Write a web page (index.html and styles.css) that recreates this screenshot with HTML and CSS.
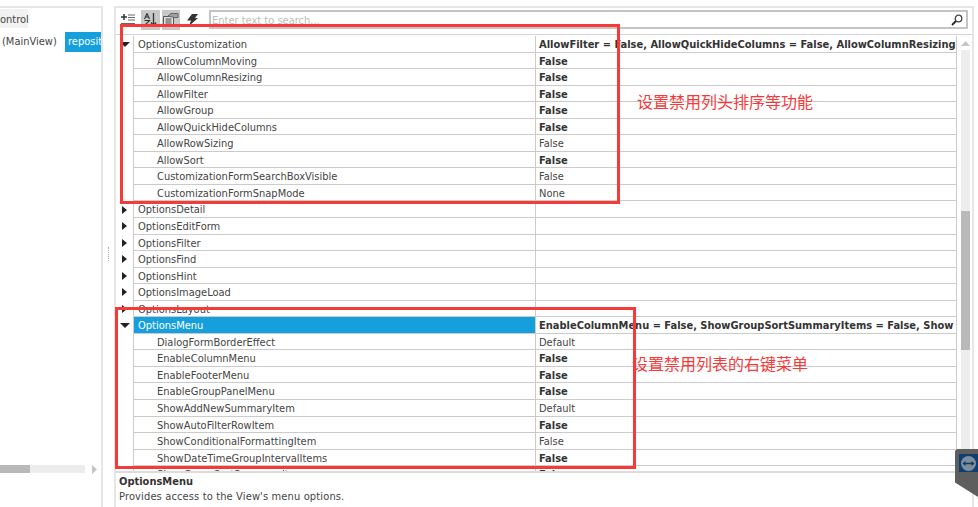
FILE: index.html
```html
<!DOCTYPE html>
<html lang="en">
<head>
<meta charset="utf-8">
<title>Properties</title>
<link rel="stylesheet" href="styles.css">
</head>
<body>
<div class="page">
  <aside class="tree">
    <div class="tree-body">
      <div class="tree-head"><span class="tree-root">ontrol</span></div>
      <div class="tree-line"><span class="tree-view">(MainView)</span><span class="tree-sel">reposit</span></div>
    </div>
    <div class="hscroll">
      <span class="hthumb"></span><span class="htrack"></span>
      <svg class="harrow" width="5" height="9" viewBox="0 0 5 9"><path d="M0 0l5 4.500L0 9z" fill="#c4c4c4"/></svg>
    </div>
  </aside>
  <div class="splitter"><span class="dots"></span></div>
  <main class="props">
    <div class="toolbar">
      <button class="tool first">
        <svg width="14" height="12" viewBox="0 0 14 12"><path d="M0 3h6M3 0v6M0 10h14" stroke="#333" stroke-width="1.500" fill="none"/><path d="M7 1h7M7 3.500h7M7 6h7" stroke="#666" stroke-width="1" fill="none"/></svg>
      </button>
      <button class="tool on">
        <svg width="13" height="13" viewBox="0 0 13 13"><path d="M0.500 6l2.500-5.500L5.500 6M1.300 4h3.400M0.500 7.500h5L0.500 12.500h5" stroke="#333" stroke-width="1.100" fill="none"/><path d="M9.500 0v12M7 9.500l2.500 3 2.500-3" stroke="#333" stroke-width="1.300" fill="none"/></svg>
      </button>
      <button class="tool on">
        <svg width="16" height="13" viewBox="0 0 16 13"><path d="M0.500 3.500h10v9h-10z" fill="#e4e4e4" stroke="#555"/><path d="M2.500 6h6M2.500 8h6M2.500 10h6" stroke="#444"/><path d="M5 3l3-2.500h7v4h-4z" fill="#a2a2a2" stroke="#666"/></svg>
      </button>
      <button class="tool bolt">
        <svg width="11" height="12" viewBox="0 0 11 12"><path d="M5 0h6L8 4h3L2 12l2-5.500H0z" fill="#333"/></svg>
      </button>
      <div class="search">
        <span class="placeholder">Enter text to search...</span>
        <svg class="glass" width="12" height="12" viewBox="0 0 12 12"><circle cx="7.500" cy="4.500" r="3.300" fill="none" stroke="#444" stroke-width="1.300"/><path d="M5 7l-4 4" stroke="#222" stroke-width="1.800"/></svg>
      </div>
    </div>
    <div class="grid-area">
      <div class="grid">
        <div class="row group"><span class="gutter"><i class="caret open"></i></span><span class="name">OptionsCustomization</span><span class="val bold">AllowFilter = False, AllowQuickHideColumns = False, AllowColumnResizing</span></div>
        <div class="row"><span class="gutter"></span><span class="name sub">AllowColumnMoving</span><span class="val bold">False</span></div>
        <div class="row"><span class="gutter"></span><span class="name sub">AllowColumnResizing</span><span class="val bold">False</span></div>
        <div class="row"><span class="gutter"></span><span class="name sub">AllowFilter</span><span class="val bold">False</span></div>
        <div class="row"><span class="gutter"></span><span class="name sub">AllowGroup</span><span class="val bold">False</span></div>
        <div class="row"><span class="gutter"></span><span class="name sub">AllowQuickHideColumns</span><span class="val bold">False</span></div>
        <div class="row"><span class="gutter"></span><span class="name sub">AllowRowSizing</span><span class="val">False</span></div>
        <div class="row"><span class="gutter"></span><span class="name sub">AllowSort</span><span class="val bold">False</span></div>
        <div class="row"><span class="gutter"></span><span class="name sub">CustomizationFormSearchBoxVisible</span><span class="val">False</span></div>
        <div class="row"><span class="gutter"></span><span class="name sub">CustomizationFormSnapMode</span><span class="val">None</span></div>
        <div class="row"><span class="gutter"><i class="caret"></i></span><span class="name">OptionsDetail</span><span class="val"></span></div>
        <div class="row"><span class="gutter"><i class="caret"></i></span><span class="name">OptionsEditForm</span><span class="val"></span></div>
        <div class="row"><span class="gutter"><i class="caret"></i></span><span class="name">OptionsFilter</span><span class="val"></span></div>
        <div class="row"><span class="gutter"><i class="caret"></i></span><span class="name">OptionsFind</span><span class="val"></span></div>
        <div class="row"><span class="gutter"><i class="caret"></i></span><span class="name">OptionsHint</span><span class="val"></span></div>
        <div class="row"><span class="gutter"><i class="caret"></i></span><span class="name">OptionsImageLoad</span><span class="val"></span></div>
        <div class="row"><span class="gutter"><i class="caret"></i></span><span class="name">OptionsLayout</span><span class="val"></span></div>
        <div class="row selected"><span class="gutter"><i class="caret open"></i></span><span class="name">OptionsMenu</span><span class="val bold">EnableColumnMenu = False, ShowGroupSortSummaryItems = False, Show</span></div>
        <div class="row"><span class="gutter"></span><span class="name sub">DialogFormBorderEffect</span><span class="val">Default</span></div>
        <div class="row"><span class="gutter"></span><span class="name sub">EnableColumnMenu</span><span class="val bold">False</span></div>
        <div class="row"><span class="gutter"></span><span class="name sub">EnableFooterMenu</span><span class="val bold">False</span></div>
        <div class="row"><span class="gutter"></span><span class="name sub">EnableGroupPanelMenu</span><span class="val bold">False</span></div>
        <div class="row"><span class="gutter"></span><span class="name sub">ShowAddNewSummaryItem</span><span class="val">Default</span></div>
        <div class="row"><span class="gutter"></span><span class="name sub">ShowAutoFilterRowItem</span><span class="val bold">False</span></div>
        <div class="row"><span class="gutter"></span><span class="name sub">ShowConditionalFormattingItem</span><span class="val">False</span></div>
        <div class="row"><span class="gutter"></span><span class="name sub">ShowDateTimeGroupIntervalItems</span><span class="val bold">False</span></div>
        <div class="row"><span class="gutter"></span><span class="name sub">ShowGroupSortSummaryItems</span><span class="val bold">False</span></div>
      </div>
      <div class="vscroll">
        <svg class="varrow" width="9" height="5" viewBox="0 0 9 5"><path d="M0 5l4.500-5L9 5z" fill="#c4c4c4"/></svg>
        <div class="vtrack"><span class="vgap"></span><span class="vthumb"></span></div>
      </div>
    </div>
    <div class="desc">
      <div class="desc-title">OptionsMenu</div>
      <div class="desc-text">Provides access to the View's menu options.</div>
    </div>
  </main>
</div>
<div class="mark mark-top"></div>
<div class="mark mark-menu"></div>
<div class="note note-top">设置禁用列头排序等功能</div>
<div class="note note-menu">设置禁用列表的右键菜单</div>
<div class="tv-tab">
  <span class="tv-logo">
    <svg width="17" height="17" viewBox="0 0 17 17"><circle cx="8.500" cy="8.500" r="7.500" fill="#7d8d9c"/><path d="M2.500 8.500l3-2.500v1.700h6V6l3 2.500-3 2.500V9.300h-6V11z" fill="#0e3a66"/></svg>
  </span>
</div>
</body>
</html>
```
FILE: styles.css
```css
* { box-sizing: border-box; }
html, body { margin: 0; height: 100%; background: #fff; overflow: hidden; }
body { font-family: "DejaVu Sans Condensed", "DejaVu Sans", sans-serif; font-stretch: condensed; font-size: 11px; color: #444; }

.page { display: flex; height: 507px; padding-top: 6px; }

.tree { width: 103px; flex: none; display: flex; flex-direction: column; border-top: 2px solid #e6e6e6; border-right: 2px solid #e6e6e6; }
.tree-body { height: 457px; overflow: hidden; white-space: nowrap; }
.tree-head { height: 22px; padding-top: 1px; }
.tree-root { display: inline-block; width: 28px; height: 19px; line-height: 21px; background: #f2f2f2; text-align: right; padding-right: 1px; }
.tree-line { display: flex; align-items: center; height: 20px; margin-top: 2px; }
.tree-view { padding-left: 2px; width: 65px; flex: none; line-height: 16px; }
.tree-sel { flex: 1; height: 20px; line-height: 20px; background: #159fdc; color: #fff; padding-left: 3px; overflow: hidden; }
.hscroll { display: flex; align-items: center; height: 8px; }
.hthumb { width: 30px; height: 8px; background: #b9b9b9; }
.htrack { width: 55px; height: 8px; background: #ececec; }
.harrow { margin-left: 7px; }

.splitter { width: 11px; flex: none; display: flex; align-items: center; justify-content: center; }
.dots { width: 1px; height: 14px; margin-bottom: 5px; border-left: 1px dotted #aaa; }

.props { width: 860px; flex: none; display: flex; flex-direction: column; border: 2px solid #e6e6e6; border-bottom: 0; }
.toolbar { display: flex; align-items: center; height: 27px; padding: 2px 4px 5px 4px; border-bottom: 1px solid #d6d6d6; flex: none; }
.tool { width: 20px; height: 20px; padding: 0; margin: 0 2px 0 0; border: 0; background: none; display: flex; align-items: center; justify-content: center; }
.tool.first { width: 16px; margin-right: 6px; justify-content: flex-end; }
.tool.on { background: #c8c8c8; }
.tool.bolt { margin-left: 1px; margin-right: 7px; }
.search { flex: none; width: 759px; height: 19px; border: 2px solid #c4c4c4; display: flex; align-items: center; justify-content: space-between; padding: 0 3px 0 1px; }
.placeholder { color: #bdbdbd; padding-top: 1px; }
.glass { flex: none; }

.grid-area { display: flex; height: 436px; flex: none; }
.grid { width: 841px; height: 436px; overflow: hidden; flex: none; padding-top: 1px; }
.row { display: grid; grid-template-columns: 17px 402px 422px; grid-template-rows: 100%; height: 16.55px; line-height: 15px; white-space: nowrap; }
.gutter { position: relative; display: flex; align-items: center; justify-content: center; }
.name, .val { overflow: hidden; padding-top: 1px; border-bottom: 1px solid #cbcbcb; border-left: 1px solid #cbcbcb; }
.name { padding-left: 4px; }
.name.sub { padding-left: 23px; }
.val { padding-left: 3px; border-right: 1px solid #cbcbcb; }
.bold { font-weight: 700; color: #333; }
.caret { width: 0; height: 0; border-top: 4px solid transparent; border-bottom: 4px solid transparent; border-left: 5px solid #222; }
.caret.open { border-left: 5px solid transparent; border-right: 5px solid transparent; border-top: 5px solid #222; border-bottom: 0; }
.row.selected .name { background: #159fdc; color: #fff; }

.vscroll { width: 15px; flex: none; display: flex; flex-direction: column; align-items: center; padding: 6px 0 0 2px; }
.varrow { flex: none; }
.vtrack { width: 9px; margin-top: 4px; flex: 1; display: flex; flex-direction: column; background: #ededed; }
.vgap { height: 161px; flex: none; }
.vthumb { height: 139px; flex: none; background: #b9b9b9; width: 9px; }

.desc { flex: 1; border-top: 2px solid #dcdcdc; padding: 1px 3px; line-height: 15px; }
.desc-title { font-weight: 700; color: #333; }
.desc-text { margin-top: 0; letter-spacing: 0.14px; }

.mark { position: absolute; border: 3px solid #f63a3a; pointer-events: none; }
.mark-top { left: 120px; top: 24px; width: 500px; height: 180px; }
.mark-menu { left: 115px; top: 307px; width: 521px; height: 162px; }
.note { position: absolute; color: #f63a3a; font-family: "Noto Sans CJK SC", sans-serif; font-size: 16px; line-height: 18px; white-space: nowrap; }
.note-top { left: 637px; top: 92px; }
.note-menu { left: 632px; top: 354px; }

.tv-tab { position: absolute; left: 955px; top: 449px; width: 23px; height: 48px; background: #5e5e5e; clip-path: polygon(2px 0, 100% 0, 100% 100%, 0 70%, 0 2px); padding: 5px 0 0 4px; }
.tv-logo { display: flex; align-items: center; justify-content: center; width: 19px; height: 18px; background: #0f3f70; }
```
